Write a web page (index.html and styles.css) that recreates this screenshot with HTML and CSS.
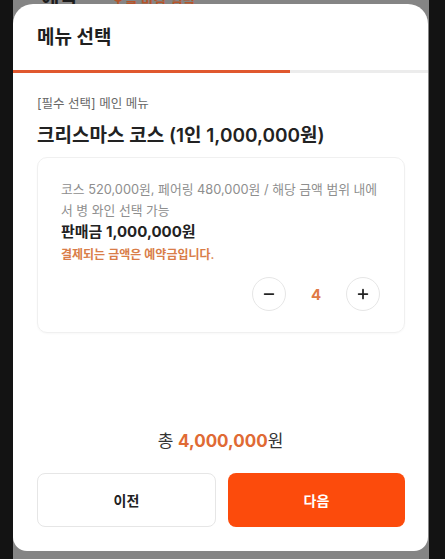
FILE: index.html
```html
<html>
    <head>
        <title>메뉴 선택</title>
    <link rel="stylesheet" href="styles.css">
</head>
<body>

    <div class="screen">
        <!-- page behind the sheet, dimmed -->
        <div class="behind">
            <span class="behind__title">예약</span>
            <span class="behind__note">오늘 마감 임박</span>
        </div>

        <section class="sheet">
            <h2 class="sheet__title">메뉴 선택</h2>
            <div class="progress"><div class="progress__fill" style="width: 66.8%;"></div></div>

            <div class="sheet__body">
                <p class="step-label">[필수 선택] 메인 메뉴</p>
                <h3 class="menu-name">크리스마스 코스 (1인 1,000,000원)</h3>

                <div class="option">
                    <p class="option__desc">코스 520,000원, 페어링 480,000원 / 해당 금액 범위 내에서 병 와인 선택 가능</p>
                    <p class="option__price">판매금 1,000,000원</p>
                    <p class="option__notice">결제되는 금액은 예약금입니다.</p>
                    <div class="stepper">
                        <button class="stepper__btn">
                            <svg viewBox="0 0 16 16" width="14" height="14"><path d="M3 8h10" stroke="#222" stroke-width="2" stroke-linecap="round"/></svg>
                        </button>
                        <span class="stepper__count">4</span>
                        <button class="stepper__btn">
                            <svg viewBox="0 0 16 16" width="14" height="14"><path d="M3 8h10M8 3v10" stroke="#222" stroke-width="2" stroke-linecap="round"/></svg>
                        </button>
                    </div>
                </div>
            </div>

            <p class="total">총 <strong>4,000,000</strong>원</p>

            <div class="actions">
                <button class="btn btn--ghost">이전</button>
                <button class="btn btn--primary">다음</button>
            </div>
        </section>
    </div>

</body>
</html>
```

FILE: styles.css
```css
* {
    border: 0;
    box-sizing: border-box;
    margin: 0;
    padding: 0;
}
:root {
    --orange: #fc4b0c;
    --orange-soft: #e06a34;
    --ink: #1f1f1f;
}
body {
    background-color: #131313;
    color: var(--ink);
    font-family: Inter, "Noto Sans CJK KR", sans-serif;
    height: 559px;
    overflow: hidden;
}
.screen {
    margin-left: 13px;
    width: 416px;
    height: 559px;
    background-color: #858585;
}
.behind {
    height: 4px;
    overflow: hidden;
    display: flex;
    align-items: flex-end;
    gap: 34px;
    padding-left: 28px;
}
.behind__title {
    font-size: 20px;
    line-height: 12px;
    font-weight: 700;
    color: #1d1d1d;
}
.behind__note {
    font-size: 14px;
    line-height: 9px;
    font-weight: 700;
    color: #b5552c;
}
.sheet {
    background-color: #fff;
    width: 415px;
    height: 547px;
    border-radius: 20px 20px 14px 14px;
    display: flex;
    flex-direction: column;
    padding-top: 20px;
    padding-bottom: 24px;
}
.sheet__title {
    font-size: 19px;
    line-height: 28px;
    font-weight: 700;
    padding-left: 24px;
}
.progress {
    margin-top: 18px;
    height: 3px;
    background-color: #ececec;
}
.progress__fill {
    height: 100%;
    background-color: #e0582f;
}
.sheet__body {
    padding: 0 23px 0 24px;
    flex: 1;
}
.step-label {
    margin-top: 22px;
    font-size: 12.5px;
    line-height: 18px;
    color: #666;
}
.menu-name {
    margin-top: 10px;
    font-size: 19px;
    line-height: 26px;
    font-weight: 600;
    color: #222;
}
.option {
    margin-top: 8px;
    border: 1px solid #f0f0f0;
    border-radius: 10px;
    padding: 21px 21px 21px 23px;
    box-shadow: 0 1px 2px rgba(0,0,0,0.03);
}
.option__desc {
    font-size: 12.8px;
    line-height: 21px;
    color: #8e8e8e;
}
.option__price {
    font-size: 15px;
    line-height: 22px;
    font-weight: 700;
    color: #222;
}
.option__notice {
    margin-top: 3px;
    font-size: 12px;
    line-height: 18px;
    font-weight: 600;
    color: #d97d48;
}
.stepper {
    margin-top: 13px;
    padding-right: 3px;
    display: flex;
    justify-content: flex-end;
    align-items: center;
}
.stepper__btn {
    width: 34px;
    height: 34px;
    border-radius: 50%;
    border: 1px solid #e6e6e6;
    background-color: #fff;
    display: grid;
    place-items: center;
}
.stepper__count {
    width: 60px;
    text-align: center;
    font-size: 15px;
    font-weight: 700;
    color: #e07a45;
}
.total {
    text-align: center;
    font-size: 17px;
    line-height: 24px;
    color: #333;
    margin-bottom: 20px;
}
.total strong {
    color: var(--orange-soft);
    font-weight: 700;
}
.actions {
    display: flex;
    gap: 12px;
    padding: 0 23px 0 24px;
}
.btn {
    flex: 1;
    height: 54px;
    border-radius: 8px;
    font-family: inherit;
    font-size: 14px;
    font-weight: 700;
}
.btn--ghost {
    background-color: #fff;
    border: 1px solid #e6e6e6;
    color: #222;
}
.btn--primary {
    background-color: var(--orange);
    color: #fff;
}
```
